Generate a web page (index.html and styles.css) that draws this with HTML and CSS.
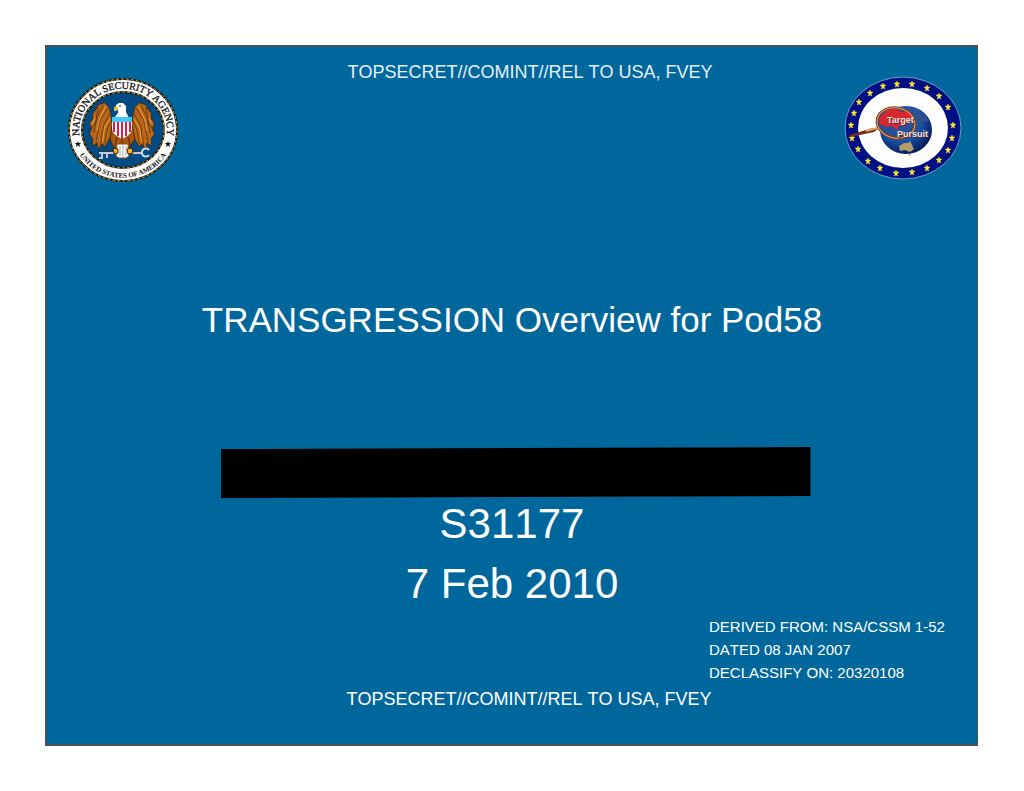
FILE: index.html
```html
<!DOCTYPE html>
<html lang="en">
<head>
<meta charset="utf-8">
<meta name="viewport" content="width=device-width, initial-scale=1">
<title>TRANSGRESSION Overview for Pod58</title>
<link rel="stylesheet" href="styles.css">
</head>
<body>
<main class="slide">
  <header class="slide-header">
    <svg class="seal" width="124" height="120" viewBox="0 0 124 120" role="img" aria-label="National Security Agency seal">
      <defs>
        <path id="ring-top" d="M21 72 A44 41 0 1 1 105 72"/>
        <path id="ring-bottom" d="M14 73 A51 48 0 0 0 112 73"/>
        <g id="wing">
          <path d="M51 46 L49 38 L45 34 L42 35 L39 36 L37 40 L34 44 L34 49 L31 53 L33 58 L31 63 L34 67 L34 74 L38 71 L39 77 L43 72 L45 75 L49 68 L53 62Z" fill="#b86818" stroke="#4a2108" stroke-width=".7"/>
          <path d="M44 36 L38 47 L35 62 M48 39 L41 50 L37 70 M50 44 L44 55 L41 74 M52 48 L47 60 L45 72 M39 38 L37 51 L33 58" fill="none" stroke="#5b2b09" stroke-width=".7"/>
          <path d="M46 37 L40 50 L38 60 M50 49 L45 57 L43 70 M36 48 L34 54" fill="none" stroke="#e49a40"/>
        </g>
      </defs>
      <ellipse cx="63" cy="60" rx="54" ry="51" fill="#fff" stroke="#111" stroke-width="2"/>
      <ellipse cx="63" cy="60" rx="54" ry="51" fill="none" stroke="#d9ad42" stroke-dasharray="3 2"/>
      <ellipse cx="63" cy="60" rx="41" ry="38" fill="#004b83" stroke="#111" stroke-width="2"/>
      <ellipse cx="63" cy="60" rx="41" ry="38" fill="none" stroke="#d9ad42" stroke-dasharray="3 2"/>
      <text class="seal-name"><textPath href="#ring-top" startOffset="50%" text-anchor="middle">NATIONAL SECURITY AGENCY</textPath></text>
      <text class="seal-country"><textPath href="#ring-bottom" startOffset="50%" text-anchor="middle">UNITED STATES OF AMERICA</textPath></text>
      <path id="seal-star" d="M18 71 l.8 2 h2.4 l-1.8 1.6 .8 2.4 -2.2 -1.4 -2.2 1.4 .8 -2.4 -1.8 -1.6 h2.4z" fill="#111"/>
      <use href="#seal-star" x="90" y="0"/>
      <use href="#wing" transform="translate(-4 -4) scale(1.08)"/>
      <use href="#wing" transform="matrix(-1.08 0 0 1.08 128 -4)"/>
      <path d="M52 55 L72 55 L75 69 L70 76 L67 79 L57 79 L53 76 L50 69Z" fill="#a65812" stroke="#4a2108"/>
      <path d="M57 67 L55 76 M62 66 V76 M68 67 L70 75" stroke="#552607"/>
      <path d="M55 40 L56 35 L59 33 L63 33 L66 36 L66 42 L69 48 H54 L58 43 L58 40 L55 41Z" fill="#fff"/>
      <path d="M54 37 h4 v3 l-3 0 -1 2z" fill="#f1b927"/>
      <path d="M59 36 h2" stroke="#222"/>
      <path d="M39 83 H82 M42 83 v5 h-3 m8 -5 v5" stroke="#c9cad0" stroke-width="2" fill="none"/>
      <path d="M38 81 H79" stroke="#343440"/>
      <path d="M89 80 a4 4 0 1 0 0 5" fill="none" stroke="#d6d8dd" stroke-width="2"/>
      <path d="M57 74 L68 74 L69 86 L66 88 H59 L56 86Z" fill="#fff" stroke="#8b4d16"/>
      <path d="M60 76 V86 M63 75 V87 M66 76 V86" stroke="#a9a9a9"/>
      <path d="M53 78 l5 1 0 4 -4 1z M67 79 l5 -1 1 5 -5 1z" fill="#f0b827" stroke="#4a2108"/>
      <path d="M52 47 H72 V58 C72 63 68 66 62 69 C56 66 52 63 52 58Z" fill="#fff"/>
      <path d="M54 51 V62 M58 51 V66 M62 51 V69 M66 51 V66 M70 51 V62" stroke="#d51f49" stroke-width="2"/>
      <path d="M52 47 H72 V52 H52Z" fill="#43c7ef"/>
    </svg>
    <p class="marking marking-top">TOPSECRET//COMINT//REL TO USA, FVEY</p>
    <svg class="emblem" width="130" height="116" viewBox="0 0 130 116" role="img" aria-label="Target Pursuit emblem">
      <defs>
        <radialGradient id="globe" cx="40%" cy="35%" r="65%">
          <stop offset="0" stop-color="#4270bd"/>
          <stop offset=".65" stop-color="#174b9d"/>
          <stop offset="1" stop-color="#071c60"/>
        </radialGradient>
        <path id="star" d="M0 -3 L1 -1 L3 -1 L1 1 L2 3 L0 2 L-2 3 L-1 1 L-3 -1 L-1 -1Z" fill="#ffe52e" stroke="#ffe52e" stroke-width=".4"/>
      </defs>
      <ellipse cx="65" cy="58" rx="58" ry="51" fill="#000f83" stroke="#6f9fc5"/>
      <ellipse cx="65" cy="58" rx="45" ry="40" fill="#fdfdfd"/>
      <use href="#star" x="59" y="14"/><use href="#star" x="74" y="14"/>
      <use href="#star" x="89" y="18"/><use href="#star" x="101" y="26"/>
      <use href="#star" x="110" y="37"/>
      <use href="#star" x="115" y="55"/><use href="#star" x="114" y="68"/>
      <use href="#star" x="110" y="80"/><use href="#star" x="101" y="90"/>
      <use href="#star" x="89" y="98"/><use href="#star" x="74" y="102"/>
      <use href="#star" x="58" y="103"/><use href="#star" x="42" y="98"/>
      <use href="#star" x="30" y="91"/><use href="#star" x="20" y="79"/>
      <use href="#star" x="14" y="68"/><use href="#star" x="13" y="55"/>
      <use href="#star" x="16" y="43"/><use href="#star" x="21" y="32"/>
      <use href="#star" x="32" y="23"/><use href="#star" x="45" y="16"/>
      <ellipse cx="68" cy="60" rx="26" ry="24" fill="url(#globe)"/>
      <path d="M70 37 l9 2 8 6 4 6 -7 1 -5 5 -6 -4 3 -7z" fill="#2b5195"/>
      <path d="M61 76 l5 -3 4 0 2 -2 2 4 2 4 -4 3 -5 -2 -5 1z M70 84 l3 0 -1 2z" fill="#b49c65"/>
      <ellipse cx="58" cy="53" rx="19" ry="15" transform="rotate(12 58 53)" fill="#254f9b" stroke="#754021" stroke-width="3"/>
      <path d="M41 48 L48 41 L56 38 L64 42 L72 41 L74 47 L70 51 L67 57 L61 55 L59 60 L54 56 L48 57 L42 54Z" fill="#d82731"/>
      <ellipse cx="58" cy="53" rx="19" ry="15" transform="rotate(12 58 53)" fill="none" stroke="#d9a570" stroke-width="1"/>
      <path d="M11 65 L35 58 L40 59 L36 62 L12 67Z" fill="#71301d"/>
      <path d="M28 61 L39 58" stroke="#e5a15b" stroke-width="2"/>
      <text class="emblem-shadow" x="50" y="54">Target</text>
      <text class="emblem-word" x="49" y="53">Target</text>
      <text class="emblem-shadow" x="60" y="68">Pursuit</text>
      <text class="emblem-word" x="59" y="67">Pursuit</text>
    </svg>
  </header>

  <h1 class="title">TRANSGRESSION Overview for Pod58</h1>

  <section class="details">
    <div class="redaction"></div>
    <p class="detail">S31177</p>
    <p class="detail">7 Feb 2010</p>
  </section>

  <footer class="slide-footer">
    <div class="classification">
      <p>DERIVED FROM: NSA/CSSM 1-52</p>
      <p>DATED 08 JAN 2007</p>
      <p>DECLASSIFY ON: 20320108</p>
    </div>
    <p class="marking marking-bottom">TOPSECRET//COMINT//REL TO USA, FVEY</p>
  </footer>
</main>
</body>
</html>
```
FILE: styles.css
```css
* { box-sizing: border-box; }

body {
  margin: 0;
  padding: 45px 46px 45px 45px;
  min-height: 100vh;
  display: flex;
  background: #fff;
  color: #fff;
  font-family: "Liberation Sans", Arial, sans-serif;
  font-kerning: none;
}

p, h1 { margin: 0; font-weight: 400; }

.slide {
  flex: 1;
  display: flex;
  flex-direction: column;
  background: #00679c;
  border: 2px solid #47525b;
  border-right-width: 1px;
}

.slide-header {
  display: flex;
  justify-content: space-between;
  padding: 14px 9px 0 13px;
}

.seal, .emblem { flex: none; margin-top: 9px; }

.marking {
  font-size: 18px;
  line-height: 22px;
  text-align: center;
}

.marking-top { padding-left: 38px; color: #e4f0f8; }

.title {
  margin-top: 110px;
  font-size: 35px;
  line-height: 40px;
  text-align: center;
}

.details {
  margin-top: 107px;
  font-size: 42px;
  line-height: 60px;
  text-align: center;
}

.redaction {
  width: 63.4%;
  height: 51px;
  margin: 0 0 -4px 18.7%;
  background: #000;
  clip-path: polygon(0 2px, 100% 0, 100% calc(100% - 2px), 0 100%);
}

.slide-footer {
  margin-top: auto;
  padding-bottom: 34px;
}

.classification {
  width: 268px;
  margin-left: auto;
  font-size: 15px;
  line-height: 23px;
}

.marking-bottom { margin-top: 4px; padding-left: 34px; }

.seal-name {
  font: 10px "Liberation Serif", serif;
  fill: #111;
  stroke: #111;
  stroke-width: .3;
}

.seal-country {
  font: bold 7px "Liberation Serif", serif;
  fill: #111;
}

.emblem-word, .emblem-shadow { font: bold 9px "Liberation Sans", sans-serif; }
.emblem-word { fill: #f8e5d1; }
.emblem-shadow { fill: #51253b; }
```
